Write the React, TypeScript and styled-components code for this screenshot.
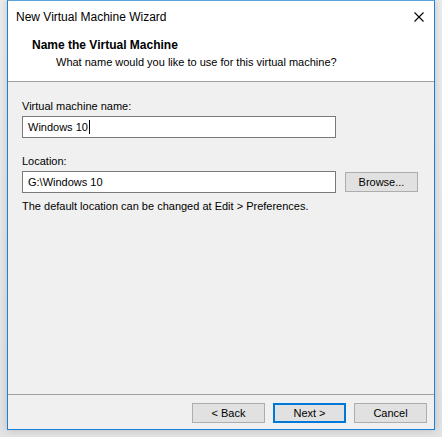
import styled, { createGlobalStyle } from 'styled-components'

const GlobalStyle = createGlobalStyle`
  html, body {
    margin: 0;
    padding: 0;
    background: #e4e4e4;
  }
  body {
    font-family: 'Liberation Sans', Arial, sans-serif;
    font-size: 11px;
    color: #000;
  }
`

const Page = styled.div`
  width: 442px;
  height: 437px;
  padding-left: 7px;
  box-sizing: border-box;
  background: linear-gradient(to bottom, #ececec, #e3e3e3);
`

const Window = styled.div`
  width: 428px;
  height: 430px;
  box-sizing: border-box;
  border: 1px solid #1a82d6;
  border-top-color: #5aa5e0;
  background: #f0f0f0;
  display: flex;
  flex-direction: column;
  box-shadow: 0 0 8px rgba(0, 0, 0, 0.18);
`

const TitleBar = styled.div`
  height: 31px;
  flex-shrink: 0;
  display: flex;
  align-items: center;
  justify-content: space-between;
  padding: 0 10px 0 8px;
  background: #fff;
  font-size: 12px;
`

const CloseButton = styled.button`
  width: 10px;
  height: 10px;
  padding: 0;
  border: none;
  background: none;
  display: flex;
  align-items: center;
  justify-content: center;
`

const Header = styled.div`
  height: 50px;
  flex-shrink: 0;
  box-sizing: border-box;
  background: #fff;
  padding: 5px 0 0 24px;
  border-bottom: 1px solid #a0a0a0;
`

const HeaderTitle = styled.div`
  font-weight: 700;
  font-size: 12px;
  line-height: 17px;
`

const HeaderSub = styled.div`
  padding-left: 24px;
  line-height: 17px;
`

const Body = styled.div`
  flex: 1;
  padding: 17px 14px 0 14px;
  display: flex;
  flex-direction: column;
`

const Label = styled.div<{ $mb: number }>`
  line-height: 14px;
  margin-bottom: ${p => p.$mb}px;
`

const Row = styled.div`
  display: flex;
  align-items: center;
  gap: 9px;
`

const TextBox = styled.div<{ $mb?: number }>`
  width: 314px;
  height: 22px;
  box-sizing: border-box;
  border: 1px solid #7a7a7a;
  background: #fff;
  padding-left: 5px;
  display: flex;
  align-items: center;
  margin-bottom: ${p => p.$mb ?? 0}px;
`

const Caret = styled.span`
  display: inline-block;
  width: 1px;
  height: 14px;
  background: #000;
  margin-left: 1px;
`

const Button = styled.button<{ $default?: boolean }>`
  width: 73px;
  height: 20px;
  box-sizing: border-box;
  border: ${p => (p.$default ? '2px solid #0078d7' : '1px solid #adadad')};
  background: #e1e1e1;
  font-family: inherit;
  font-size: 11px;
  color: #000;
  padding: 0;
`

const Hint = styled.div`
  line-height: 14px;
  margin-top: 6px;
`

const Footer = styled.div`
  height: 35px;
  flex-shrink: 0;
  box-sizing: border-box;
  border-top: 1px solid #a0a0a0;
  display: flex;
  justify-content: flex-end;
  align-items: flex-start;
  padding: 8px 7px 0 0;
  gap: 8px;
`

export default function App() {
  return (
    <>
      <GlobalStyle />
      <Page>
        <Window>
          <TitleBar>
            <span>New Virtual Machine Wizard</span>
            <CloseButton aria-label="Close">
              <svg width="10" height="10" viewBox="0 0 10 10">
                <path d="M0.5 0.5 L9.5 9.5 M9.5 0.5 L0.5 9.5" stroke="#000" strokeWidth="1.1" />
              </svg>
            </CloseButton>
          </TitleBar>
          <Header>
            <HeaderTitle>Name the Virtual Machine</HeaderTitle>
            <HeaderSub>What name would you like to use for this virtual machine?</HeaderSub>
          </Header>
          <Body>
            <Label $mb={3}>Virtual machine name:</Label>
            <TextBox $mb={16}>
              Windows 10<Caret />
            </TextBox>
            <Label $mb={3}>Location:</Label>
            <Row>
              <TextBox>G:\Windows 10</TextBox>
              <Button>Browse...</Button>
            </Row>
            <Hint>The default location can be changed at Edit &gt; Preferences.</Hint>
          </Body>
          <Footer>
            <Button>&lt; Back</Button>
            <Button $default>Next &gt;</Button>
            <Button>Cancel</Button>
          </Footer>
        </Window>
      </Page>
    </>
  )
}
